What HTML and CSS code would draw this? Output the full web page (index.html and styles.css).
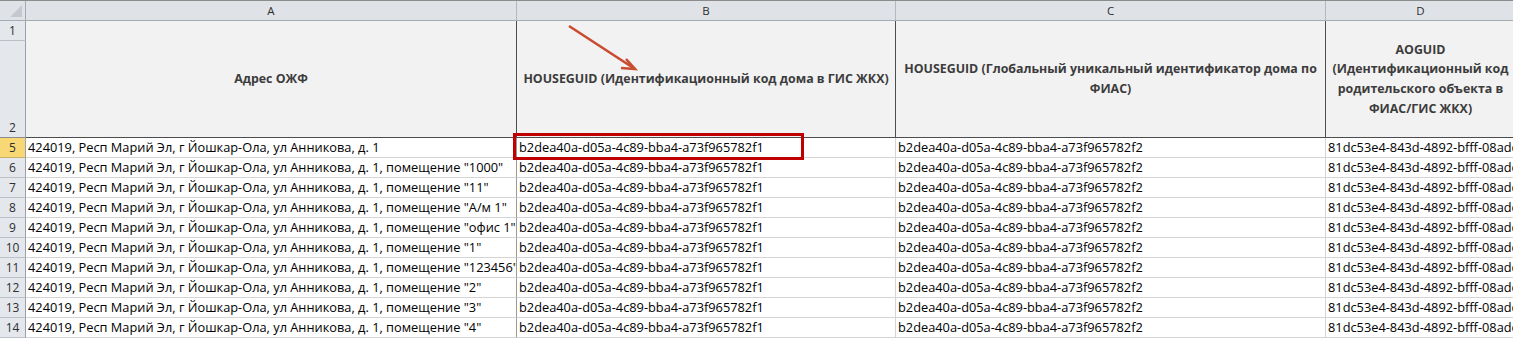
FILE: index.html
```html
<!DOCTYPE html>
<html lang="ru">
<head>
<meta charset="utf-8">
<title>Лист</title>
<link rel="stylesheet" href="styles.css">
</head>
<body>
<div class="sheet">
  <div class="corner"><span class="corner-tri"></span></div>
  <div class="colhead">A</div>
  <div class="colhead">B</div>
  <div class="colhead">C</div>
  <div class="colhead">D</div>

  <div class="rowhead r1">1</div>
  <div class="hcell hA">Адрес ОЖФ</div>
  <div class="hcell hB">HOUSEGUID (Идентификационный код дома в ГИС ЖКХ)</div>
  <div class="hcell hC">HOUSEGUID (Глобальный уникальный идентификатор дома по<br>ФИАС)</div>
  <div class="hcell hD">AOGUID<br>(Идентификационный код<br>родительского объекта в<br>ФИАС/ГИС ЖКХ)</div>
  <div class="rowhead r2">2</div>

  <div class="rowhead sel">5</div>
  <div class="cell ca">424019, Респ Марий Эл, г Йошкар-Ола, ул Анникова, д. 1</div>
  <div class="cell">b2dea40a-d05a-4c89-bba4-a73f965782f1</div>
  <div class="cell">b2dea40a-d05a-4c89-bba4-a73f965782f2</div>
  <div class="cell">81dc53e4-843d-4892-bfff-08adc1e3f0a5</div>

  <div class="rowhead">6</div>
  <div class="cell ca">424019, Респ Марий Эл, г Йошкар-Ола, ул Анникова, д. 1, помещение "1000"</div>
  <div class="cell">b2dea40a-d05a-4c89-bba4-a73f965782f1</div>
  <div class="cell">b2dea40a-d05a-4c89-bba4-a73f965782f2</div>
  <div class="cell">81dc53e4-843d-4892-bfff-08adc1e3f0a5</div>

  <div class="rowhead">7</div>
  <div class="cell ca">424019, Респ Марий Эл, г Йошкар-Ола, ул Анникова, д. 1, помещение "11"</div>
  <div class="cell">b2dea40a-d05a-4c89-bba4-a73f965782f1</div>
  <div class="cell">b2dea40a-d05a-4c89-bba4-a73f965782f2</div>
  <div class="cell">81dc53e4-843d-4892-bfff-08adc1e3f0a5</div>

  <div class="rowhead">8</div>
  <div class="cell ca">424019, Респ Марий Эл, г Йошкар-Ола, ул Анникова, д. 1, помещение "А/м 1"</div>
  <div class="cell">b2dea40a-d05a-4c89-bba4-a73f965782f1</div>
  <div class="cell">b2dea40a-d05a-4c89-bba4-a73f965782f2</div>
  <div class="cell">81dc53e4-843d-4892-bfff-08adc1e3f0a5</div>

  <div class="rowhead">9</div>
  <div class="cell ca">424019, Респ Марий Эл, г Йошкар-Ола, ул Анникова, д. 1, помещение "офис 1"</div>
  <div class="cell">b2dea40a-d05a-4c89-bba4-a73f965782f1</div>
  <div class="cell">b2dea40a-d05a-4c89-bba4-a73f965782f2</div>
  <div class="cell">81dc53e4-843d-4892-bfff-08adc1e3f0a5</div>

  <div class="rowhead">10</div>
  <div class="cell ca">424019, Респ Марий Эл, г Йошкар-Ола, ул Анникова, д. 1, помещение "1"</div>
  <div class="cell">b2dea40a-d05a-4c89-bba4-a73f965782f1</div>
  <div class="cell">b2dea40a-d05a-4c89-bba4-a73f965782f2</div>
  <div class="cell">81dc53e4-843d-4892-bfff-08adc1e3f0a5</div>

  <div class="rowhead">11</div>
  <div class="cell ca">424019, Респ Марий Эл, г Йошкар-Ола, ул Анникова, д. 1, помещение "123456"</div>
  <div class="cell">b2dea40a-d05a-4c89-bba4-a73f965782f1</div>
  <div class="cell">b2dea40a-d05a-4c89-bba4-a73f965782f2</div>
  <div class="cell">81dc53e4-843d-4892-bfff-08adc1e3f0a5</div>

  <div class="rowhead">12</div>
  <div class="cell ca">424019, Респ Марий Эл, г Йошкар-Ола, ул Анникова, д. 1, помещение "2"</div>
  <div class="cell">b2dea40a-d05a-4c89-bba4-a73f965782f1</div>
  <div class="cell">b2dea40a-d05a-4c89-bba4-a73f965782f2</div>
  <div class="cell">81dc53e4-843d-4892-bfff-08adc1e3f0a5</div>

  <div class="rowhead">13</div>
  <div class="cell ca">424019, Респ Марий Эл, г Йошкар-Ола, ул Анникова, д. 1, помещение "3"</div>
  <div class="cell">b2dea40a-d05a-4c89-bba4-a73f965782f1</div>
  <div class="cell">b2dea40a-d05a-4c89-bba4-a73f965782f2</div>
  <div class="cell">81dc53e4-843d-4892-bfff-08adc1e3f0a5</div>

  <div class="rowhead">14</div>
  <div class="cell ca">424019, Респ Марий Эл, г Йошкар-Ола, ул Анникова, д. 1, помещение "4"</div>
  <div class="cell">b2dea40a-d05a-4c89-bba4-a73f965782f1</div>
  <div class="cell">b2dea40a-d05a-4c89-bba4-a73f965782f2</div>
  <div class="cell">81dc53e4-843d-4892-bfff-08adc1e3f0a5</div>

  <div class="redbox"></div>
  <svg class="arrow" width="80" height="60" viewBox="0 0 80 60">
    <path d="M3 4 L69 47" fill="none" stroke="#c94b30" stroke-width="2.6" stroke-linecap="butt"/>
    <path d="M60 37 L69 47 L55 46" fill="none" stroke="#c94b30" stroke-width="2.6" stroke-linejoin="miter"/>
  </svg>
</div>
</body>
</html>
```

FILE: styles.css
```css
html, body {
  margin: 0;
  padding: 0;
  background: #ffffff;
  overflow: hidden;
}

.sheet {
  position: relative;
  display: grid;
  grid-template-columns: 26px 491px 379px 430px 190px;
  grid-template-rows: 20px 20px 97px repeat(10, 20px);
  border-top: 1px solid #8c8c8c;
  font-family: "Open Sans", "Noto Sans", sans-serif;
  width: 1516px;
}

.sheet > div {
  box-sizing: border-box;
}

.corner {
  background: #dfe3e8;
  border-right: 1px solid #a5abb3;
  border-bottom: 1px solid #a5abb3;
  position: relative;
}

.corner-tri {
  position: absolute;
  right: 3px;
  bottom: 3px;
  width: 0;
  height: 0;
  border-left: 12px solid transparent;
  border-bottom: 12px solid #c5c9ce;
}

.colhead {
  background: #dfe3e8;
  border-right: 1px solid #b4b9c0;
  border-bottom: 1px solid #a5abb3;
  color: #2e2e2e;
  font-size: 11.5px;
  line-height: 19px;
  text-align: center;
}

.rowhead {
  grid-column: 1;
  background: #e4e7ec;
  border-right: 1px solid #9aa0a8;
  border-bottom: 1px solid #bcc1c8;
  color: #2e2e2e;
  font-size: 12px;
  line-height: 19px;
  text-align: center;
}

.rowhead.r1 { grid-row: 2; }
.rowhead.r2 {
  grid-row: 3;
  border-bottom-color: #8c8c8c;
  display: flex;
  align-items: flex-end;
  justify-content: center;
}

.rowhead.sel {
  background: #f8d775;
  border-bottom-color: #c7b06a;
}

.hcell {
  grid-row: 2 / span 2;
  background: #f2f2f2;
  border-right: 1px solid #4d4d4d;
  border-bottom: 1px solid #4d4d4d;
  display: flex;
  align-items: center;
  justify-content: center;
  text-align: center;
  font-weight: 700;
  font-size: 12.4px;
  line-height: 19.6px;
  color: #3c3c3c;
  padding: 0 1px;
}

.hA { grid-column: 2; }
.hB { grid-column: 3; }
.hC { grid-column: 4; }
.hD { grid-column: 5; }

.cell {
  border-right: 1px solid #d4d4d4;
  border-bottom: 1px solid #d4d4d4;
  background: #ffffff;
  color: #000000;
  font-size: 12.8px;
  line-height: 19px;
  padding: 0 0 0 2px;
  white-space: nowrap;
  overflow: hidden;
}

.cell.ca {
  border-right-color: #9a9a9a;
}

.redbox {
  position: absolute;
  left: 513px;
  top: 132px;
  width: 291px;
  height: 27px;
  border: 3px solid #c00000;
  box-sizing: border-box;
}

.arrow {
  position: absolute;
  left: 566px;
  top: 21px;
  overflow: visible;
}
```
